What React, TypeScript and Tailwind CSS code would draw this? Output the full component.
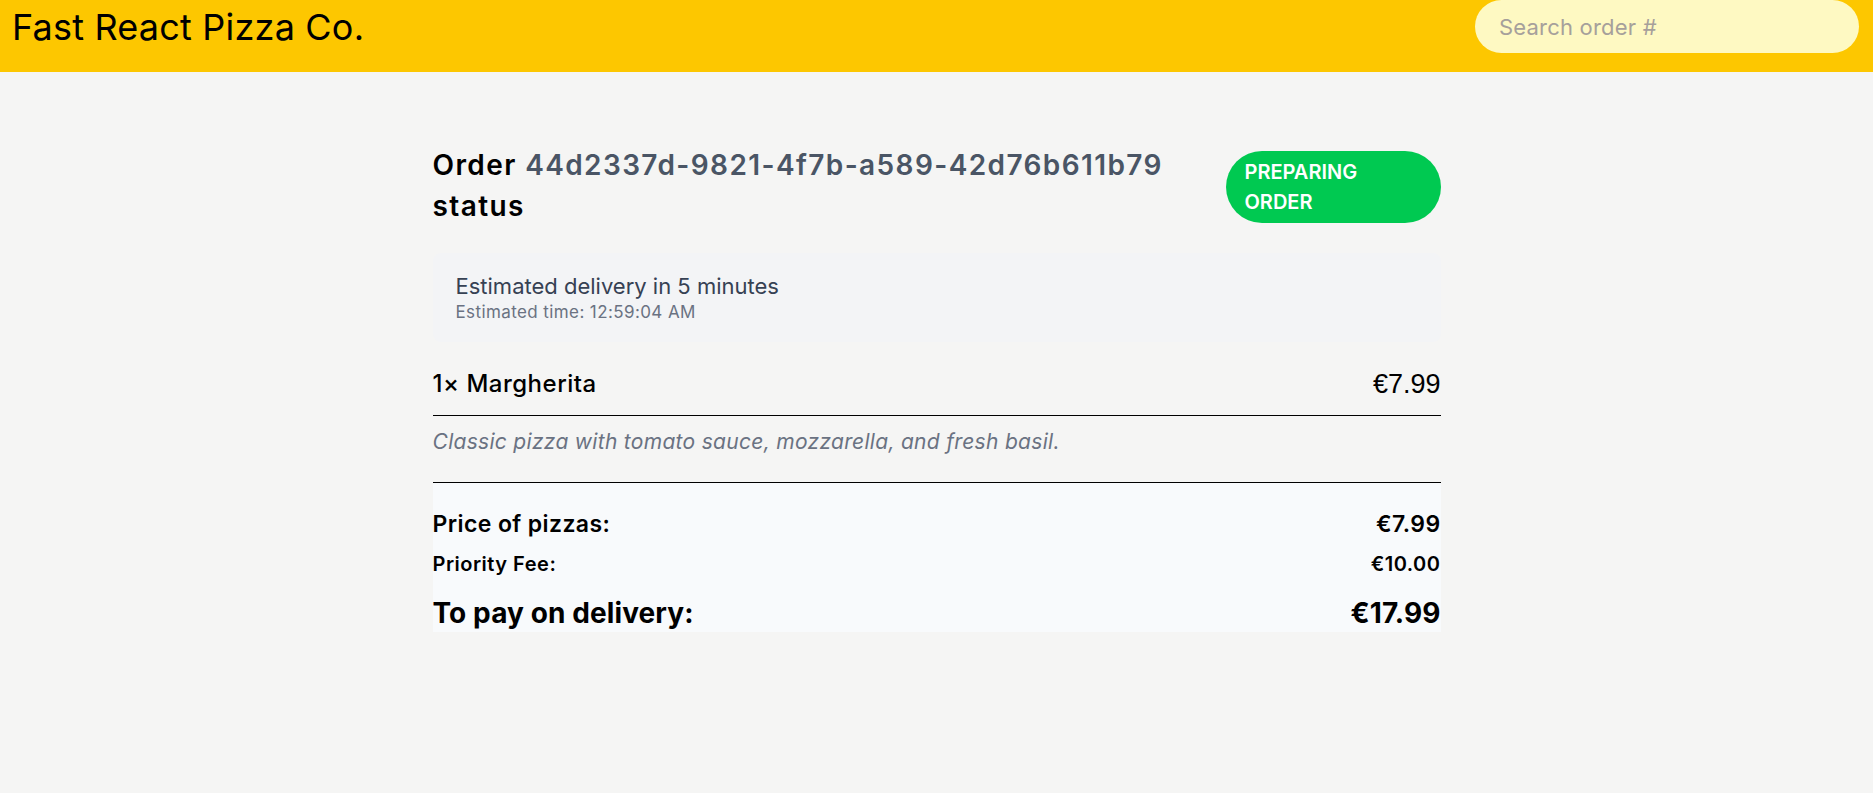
const order = {
  id: "44d2337d-9821-4f7b-a589-42d76b611b79",
  status: ["PREPARING", "ORDER"],
  eta: "Estimated delivery in 5 minutes",
  etaTime: "Estimated time: 12:59:04 AM",
  item: {
    qty: 1,
    name: "Margherita",
    price: "€7.99",
    description: "Classic pizza with tomato sauce, mozzarella, and fresh basil.",
  },
  pizzaPrice: "€7.99",
  priorityFee: "€10.00",
  total: "€17.99",
};

function Header() {
  return (
    <header className="h-[72px] bg-yellow-400">
      <div className="flex h-[53px] items-center justify-between pl-[12px] pr-[14px]">
        <div className="text-[36px] tracking-[0.2px] text-black">
          Fast React Pizza Co.
        </div>
        <input
          placeholder="Search order #"
          className="h-[53px] w-[384px] rounded-full bg-yellow-100 px-[24px] text-[22px] tracking-[0.2px] text-black placeholder:text-stone-400 focus:outline-none"
        />
      </div>
    </header>
  );
}

export default function App() {
  return (
    <div
      className="min-h-screen bg-stone-100"
      style={{ fontFamily: "Inter, 'Noto Sans', sans-serif" }}
    >
      <Header />
      <main className="mx-auto w-[1008px] pt-[73px]">
        <div className="flex items-center justify-between">
          <h2 className="text-[28px] font-semibold leading-[41px] tracking-[1.4px] text-black">
            Order <span className="text-gray-600">{order.id}</span>
            <br />
            status
          </h2>
          <div className="mt-[2px] flex h-[72px] w-[215px] flex-col justify-center rounded-full bg-green-500 px-[19px] text-[20px] font-semibold leading-[30px] text-white">
            {order.status.map((s) => (
              <span key={s}>{s}</span>
            ))}
          </div>
        </div>

        <div className="mt-[26px] flex h-[89px] flex-col justify-center rounded-lg bg-gray-100 px-[23px]">
          <p className="text-[22px] leading-[28px] text-gray-700">{order.eta}</p>
          <p className="text-[17px] leading-[24px] tracking-[0.4px] text-gray-500">
            {order.etaTime}
          </p>
        </div>

        <div className="mt-[25px] flex items-center justify-between border-b border-black pb-[14px]">
          <span className="text-[24px] font-medium leading-[34px] tracking-[0.5px] text-black">
            {order.item.qty}× {order.item.name}
          </span>
          <span
            className="text-[27px] leading-[34px] text-black"
            style={{ fontFamily: "'Liberation Sans', Arial, sans-serif" }}
          >
            {order.item.price}
          </span>
        </div>
        <div className="border-b border-black pt-[11px] pb-[25px]">
          <p className="text-[21px] italic leading-[30px] tracking-[0.3px] text-gray-500">
            {order.item.description}
          </p>
        </div>

        <div className="flex flex-col bg-slate-50 pt-[26px] pb-[1px]">
          <div className="flex items-center justify-between text-[23px] font-semibold leading-[30px] tracking-[0.4px] text-black">
            <span>Price of pizzas:</span>
            <span>{order.pizzaPrice}</span>
          </div>
          <div className="mt-[11px] flex items-center justify-between text-[20px] font-semibold leading-[28px] tracking-[0.5px] text-black">
            <span>Priority Fee:</span>
            <span>{order.priorityFee}</span>
          </div>
          <div className="mt-[17px] flex items-center justify-between text-[28px] font-bold leading-[36px] tracking-[0.1px] text-black">
            <span>To pay on delivery:</span>
            <span>{order.total}</span>
          </div>
        </div>
      </main>
    </div>
  );
}
